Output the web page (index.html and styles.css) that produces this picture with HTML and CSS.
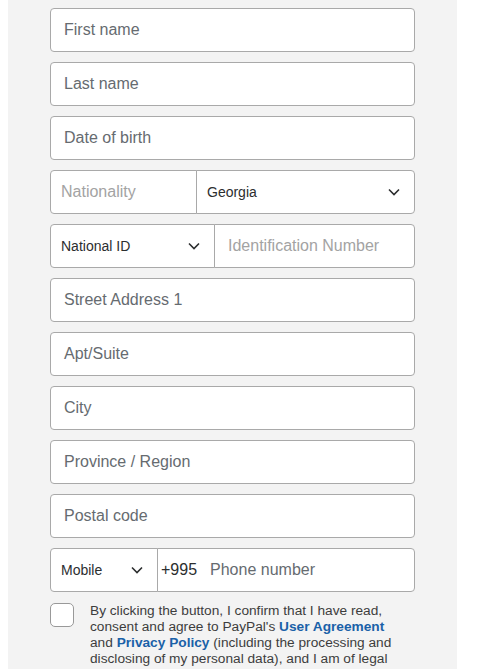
FILE: index.html
```html
<!DOCTYPE html>
<html>
<head>
<meta charset="utf-8">
<link rel="stylesheet" href="styles.css">
</head>
<body>
<div class="panel">
  <div class="field"><span class="ph">First name</span></div>
  <div class="field"><span class="ph">Last name</span></div>
  <div class="field"><span class="ph">Date of birth</span></div>
  <div class="split">
    <div class="part nat"><span class="ph light">Nationality</span></div>
    <div class="part sel georgia"><span class="val">Georgia</span><svg class="chev" viewBox="0 0 12 8"><path d="M1 1.5 L6 6.5 L11 1.5" /></svg></div>
  </div>
  <div class="split">
    <div class="part sel idtype"><span class="val">National ID</span><svg class="chev" viewBox="0 0 12 8"><path d="M1 1.5 L6 6.5 L11 1.5" /></svg></div>
    <div class="part grow"><span class="ph light">Identification Number</span></div>
  </div>
  <div class="field"><span class="ph">Street Address 1</span></div>
  <div class="field"><span class="ph">Apt/Suite</span></div>
  <div class="field"><span class="ph">City</span></div>
  <div class="field"><span class="ph">Province / Region</span></div>
  <div class="field"><span class="ph">Postal code</span></div>
  <div class="split">
    <div class="part sel mobile"><span class="val">Mobile</span><svg class="chev" viewBox="0 0 12 8"><path d="M1 1.5 L6 6.5 L11 1.5" /></svg></div>
    <div class="part grow phone"><span class="code">+995</span><span class="ph">Phone number</span></div>
  </div>
  <div class="agree">
    <div class="box"></div>
    <p class="legal">By clicking the button, I confirm that I have read, consent and agree to PayPal's <a class="lnk">User Agreement</a> and <a class="lnk">Privacy Policy</a> (including the processing and disclosing of my personal data), and I am of legal age.</p>
  </div>
</div>
</body>
</html>
```
FILE: styles.css
```css
html, body {
  margin: 0;
  padding: 0;
  background: #fff;
  overflow: hidden;
}
body {
  padding-left: 8px;
  font-family: "Liberation Sans", Arial, sans-serif;
}
.panel {
  width: 407px;
  background: #f3f3f3;
  padding: 8px 0 40px 42px;
  display: flex;
  flex-direction: column;
  gap: 10px;
  min-height: 700px;
}
.field, .part {
  box-sizing: border-box;
  height: 44px;
  background: #fff;
  border: 1px solid #a9a9a9;
  border-radius: 4px;
  display: flex;
  align-items: center;
  padding-left: 13px;
}
.field { width: 365px; }
.split {
  display: flex;
  width: 365px;
}
.split .part:first-child {
  border-top-right-radius: 0;
  border-bottom-right-radius: 0;
}
.split .part + .part {
  margin-left: -1px;
  border-top-left-radius: 0;
  border-bottom-left-radius: 0;
}
.ph {
  font-size: 16px;
  color: #666b70;
}
.ph.light { color: #a3a3a3; }
.nat { width: 147px; padding-left: 10px; }
.georgia { flex: 1; padding-left: 10px; }
.idtype { width: 165px; padding-left: 10px; }
.mobile { width: 108px; padding-left: 10px; }
.grow { flex: 1; }
.sel { justify-content: space-between; padding-right: 14px; }
.val {
  font-size: 14px;
  color: #2c2e2f;
}
.chev {
  width: 12px;
  height: 8px;
  fill: none;
  stroke: #2c2e2f;
  stroke-width: 1.6;
}
.phone { padding-left: 3px; }
.code {
  font-size: 16px;
  color: #2c2e2f;
  margin-right: 13px;
}
.agree {
  display: flex;
  align-items: flex-start;
  margin-top: 1px;
}
.box {
  box-sizing: border-box;
  width: 24px;
  height: 24px;
  flex: none;
  background: #fff;
  border: 1px solid #999;
  border-radius: 5px;
}
.legal {
  margin: 0 0 0 16px;
  width: 318px;
  font-size: 13.7px;
  line-height: 16px;
  color: #3d3d3d;
}
.lnk {
  color: #1a61a8;
  font-weight: bold;
}
```
